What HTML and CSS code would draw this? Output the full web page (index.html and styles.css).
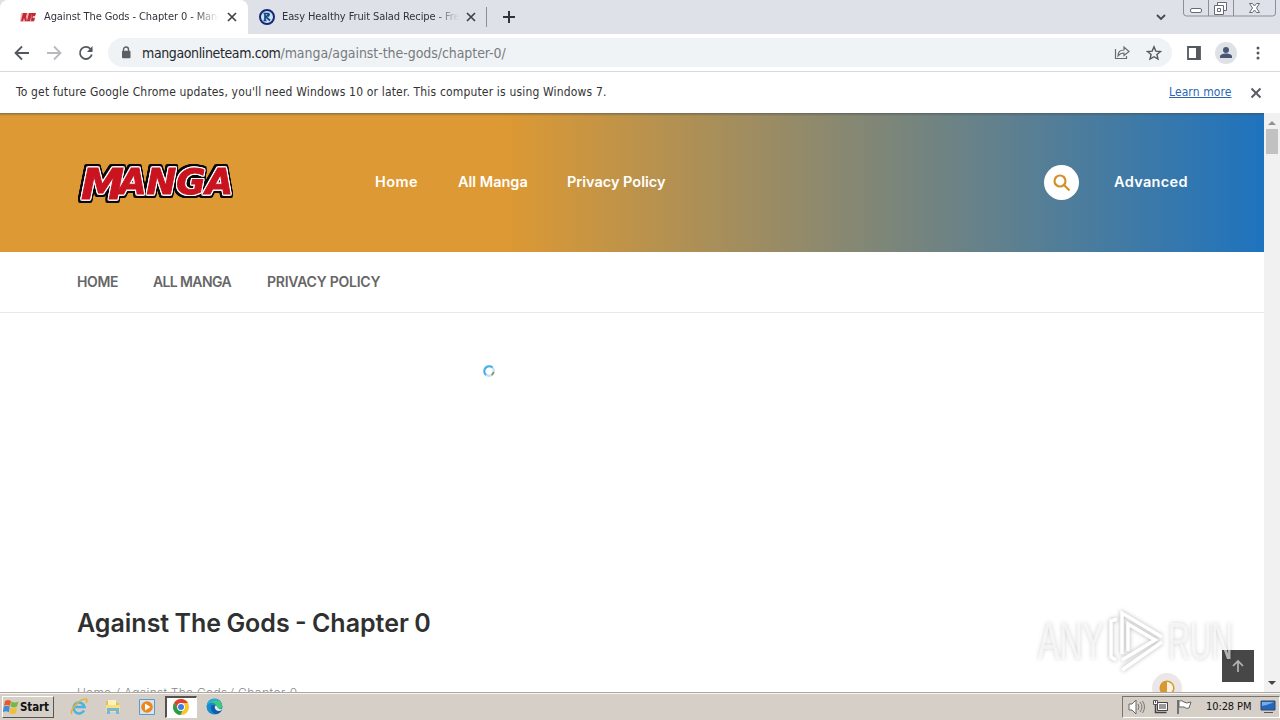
FILE: index.html
```html
<!DOCTYPE html>
<html lang="en">
<head>
<meta charset="utf-8">
<title>Against The Gods - Chapter 0</title>
<link rel="stylesheet" href="styles.css">
</head>
<body>
<div class="screen">
  <div class="tabstrip">
    <div class="tab tab-active">
      <svg class="favicon" width="16" height="16" viewBox="0 0 16 16"><path d="M1 4h15l-2 9H0z" fill="#efb9bd"/><path d="M1 12 3 4h4l-1 4 1 4H5L4 9l-1 3zM7 12l2-8h3l-2 8zM11 12l1-8h4l-1 3h-2l-.5 2H15l-1 3z" fill="#c32932"/></svg>
      <span class="tab-title title-one">Against The Gods - Chapter 0 - Mang</span>
      <svg class="tab-close" width="10" height="10" viewBox="0 0 10 10"><path d="M1 1l8 8M9 1l-8 8"/></svg>
    </div>
    <div class="tab tab-second">
      <svg class="favicon" width="16" height="16" viewBox="0 0 16 16"><circle cx="8" cy="8" r="7" fill="#c6e3fb" stroke="#18276f" stroke-width="2"/><path d="M4.500 4.500h3M4.500 11.500h3M6 4.500v7M10.500 4.500 7 8l4 3.500M7 4.500h2q2 1 0 3" fill="none" stroke="#174488" stroke-width="1.700"/></svg>
      <span class="tab-title title-two">Easy Healthy Fruit Salad Recipe - Fre</span>
      <svg class="tab-close" width="10" height="10" viewBox="0 0 10 10"><path d="M1 1l8 8M9 1l-8 8"/></svg>
    </div>
    <div class="tab-divider"></div>
    <svg class="new-tab" width="12" height="12" viewBox="0 0 12 12"><path d="M6 0v12M0 6h12"/></svg>
    <svg class="chevron" width="10" height="7" viewBox="0 0 10 7"><path d="M1 1l4 4 4-4"/></svg>
    <svg class="window-buttons" width="94" height="18" viewBox="0 0 94 18"><path d="M.5 0v13q0 3 3 3h86q3 0 3-3V0M25.500 0v16M50.500 0v16" fill="none" stroke="#8b8f98"/><rect x="7.500" y="8.500" width="11" height="4" rx="1.500" fill="#fff" stroke="#656a76"/><path d="M34.500 2.500h9v8h-9z" fill="#fff" stroke="#656a76"/><path d="M31.500 5.500h9v9h-9z" fill="#fff" stroke="#656a76"/><path d="M34.500 8.500h3v3h-3z" fill="none" stroke="#656a76"/><path d="M66.500 3.500h3l2 2.500 2-2.500h3l-3 4.500 3 4.500h-3l-2-2.500-2 2.500h-3l3-4.500z" fill="#fff" stroke="#656a76"/></svg>
  </div>

  <div class="toolbar">
    <svg class="nav-icon back" width="16" height="16" viewBox="0 0 16 16"><path d="M15 8H2M8 1.500 1.500 8 8 14.500"/></svg>
    <svg class="nav-icon forward" width="16" height="16" viewBox="0 0 16 16"><path d="M1 8h13M8 1.500 14.500 8 8 14.500"/></svg>
    <svg class="nav-icon reload" width="16" height="16" viewBox="0 0 16 16"><path d="M13.800 9.500A6 6 0 1 1 12.500 4L14 5.500"/><path d="M14.500 1v6H9z" class="solid"/></svg>
    <div class="omnibox">
      <svg class="lock" width="10" height="13" viewBox="0 0 10 13"><path d="M2.500 6V3.500a2.500 2.500 0 0 1 5 0V6" fill="none" stroke="#5b5f65" stroke-width="1.400"/><rect x="1" y="4.700" width="8.500" height="7.500" rx="1" fill="#5b5f65"/></svg>
      <span class="url"><span class="host">mangaonlineteam.com</span>/manga/against-the-gods/chapter-0/</span>
      <svg class="share" width="16" height="15" viewBox="0 0 16 15"><path d="M1.500 4v9.500h11V11M4 11c0-4 2-6 6-6V2l5 4.500-5 4V8C7 8 5.500 9 4 11z"/></svg>
      <svg class="star" width="16" height="16" viewBox="0 0 16 16"><path d="M8 1.800l1.800 4.300 4.700.4-3.600 3 1.100 4.600L8 11.700l-4 2.400 1.100-4.600-3.600-3 4.700-.4z"/></svg>
    </div>
    <svg class="panel" width="14" height="14" viewBox="0 0 14 14"><path d="M1 1h12v12H1z" fill="#fff" stroke="#55595f" stroke-width="1.800"/><path d="M9 1h4v12H9z" fill="#55595f"/></svg>
    <svg class="profile" width="22" height="22" viewBox="0 0 22 22"><circle cx="11" cy="11" r="11" fill="#dee1e6"/><circle cx="11" cy="8" r="3" fill="#485775"/><path d="M5 16v-1.500c0-4 12-4 12 0V16z" fill="#485775"/></svg>
    <svg class="more" width="4" height="14" viewBox="0 0 4 14"><circle cx="2" cy="2" r="1.500"/><circle cx="2" cy="7" r="1.500"/><circle cx="2" cy="12" r="1.500"/></svg>
  </div>

  <div class="infobar">
    <span class="notice">To get future Google Chrome updates, you'll need Windows 10 or later. This computer is using Windows 7.</span>
    <a class="learn">Learn more</a>
    <svg class="info-close" width="12" height="12" viewBox="0 0 12 12"><path d="M1.500 1.500l9 9M10.500 1.500l-9 9"/></svg>
  </div>

  <div class="viewport">
    <main class="page">
      <header class="site-header">
        <svg class="logo" width="162" height="44" viewBox="0 0 162 44"><g class="logo-word"><text class="logo-text" y="33"><tspan class="logo-m" x="5" y="38" textLength="43" lengthAdjust="spacingAndGlyphs">M</tspan><tspan x="43" y="32.500" textLength="114" lengthAdjust="spacingAndGlyphs">ANGA</tspan></text></g></svg>
        <nav class="main-nav">
          <a class="nav-home">Home</a><a class="nav-all">All Manga</a><a class="nav-privacy">Privacy Policy</a>
        </nav>
        <div class="search"><svg width="18" height="18" viewBox="0 0 18 18"><circle cx="7" cy="7" r="5.500"/><path d="M11 11l5.500 5.500"/></svg></div>
        <a class="advanced">Advanced</a>
      </header>
      <nav class="sub-nav">
        <a class="sub-home">HOME</a><a class="sub-all">ALL MANGA</a><a class="sub-privacy">PRIVACY POLICY</a>
      </nav>
      <section class="chapter">
        <h1>Against The Gods - Chapter 0</h1>
        <div class="crumbs"><span class="c-home">Home</span><i>/</i><span class="c-title">Against The Gods</span><i>/</i><span class="c-chapter">Chapter 0</span></div>
      </section>
      <svg class="spinner" width="14" height="14" viewBox="0 0 14 14"><circle cx="7" cy="7" r="4.800" fill="none" stroke="#b7e3f7" stroke-width="2.200"/><path d="M4 11A4.800 4.800 0 0 1 10.500 3.500" fill="none" stroke="#4faee8" stroke-width="2"/><path d="M11.600 8a4.800 4.800 0 0 1-2 3" fill="none" stroke="#9a8c60" stroke-width="1.800"/></svg>
      <svg class="contrast" width="30" height="30" viewBox="0 0 30 30"><circle cx="15" cy="15" r="15" fill="#ebe7e7"/><circle cx="15" cy="15" r="6.800" fill="#fff3df" stroke="#d69832" stroke-width="1.500"/><path d="M15 8a7 7 0 0 0 0 14z" fill="#d69832"/></svg>
      <div class="to-top"><svg width="14" height="14" viewBox="0 0 14 14"><path d="M7 13V2M2 7l5-5 5 5"/></svg></div>
      <svg class="watermark" width="204" height="72" viewBox="0 0 204 72"><g class="wm-shape"><text x="4" y="53" textLength="66" lengthAdjust="spacingAndGlyphs">ANY</text><text x="134" y="53" textLength="65" lengthAdjust="spacingAndGlyphs">RUN</text><path d="M83 13l-6 2v36l5 3M88 48V7l40 24M94 45V18l27 16-33 20M88 64l40-28" class="wm-line"/></g></svg>
    </main>
    <aside class="scrollbar">
      <svg width="8" height="5" viewBox="0 0 8 5"><path d="M0 5l4-4 4 4z" fill="#929292"/></svg>
      <div class="thumb"></div>
      <svg class="down" width="8" height="5" viewBox="0 0 8 5"><path d="M0 0l4 4 4-4z" fill="#444"/></svg>
    </aside>
  </div>

  <footer class="taskbar">
    <div class="start"><svg width="17" height="16" viewBox="0 0 17 16"><path d="M2 2q3-2 6 0L7 7Q4 5 1 7z" fill="#e65b2c"/><path d="M8.500 2.500q3 2 7 0L14 7.500q-3 2-6.500 0z" fill="#75b943"/><path d="M.800 7.800q3-2 6 0l-1 5.500q-3-2-6 0z" fill="#448bd1"/><path d="M7.500 8.500q3 2 6.500 0l-1 5.500q-3 2-6.500 0z" fill="#f2be36"/></svg><b>Start</b></div>
    <div class="launchers">
      <svg width="18" height="18" viewBox="0 0 18 18"><path d="M14 12.500A5.500 5.500 0 1 1 14.500 9H5" fill="none" stroke="#4bb3df" stroke-width="2.600"/><path d="M2 16C-1 13 9 1 15 1c3 0 2 2 1 4" fill="none" stroke="#dfb43a" stroke-width="1.600"/></svg>
      <svg width="18" height="18" viewBox="0 0 18 18"><path d="M2 3h5l1 2h7v9H2z" fill="#e7bf50"/><path d="M4 2h8v5H4z" fill="#f9f2bd"/><path d="M2 7h14v7H2z" fill="#f8df80"/><path d="M3 16v-6h12v6h-3v-3H6v3z" fill="#75b8df"/></svg>
      <svg width="18" height="18" viewBox="0 0 18 18"><path d="M1.500 1.500h15v15h-15z" fill="#d4e6f1" stroke="#5b9ac9"/><circle cx="9" cy="9" r="5.800" fill="#ee861c"/><path d="M7 5.500v7L12.500 9z" fill="#fff"/></svg>
      <div class="task-active"><svg width="16" height="16" viewBox="0 0 16 16"><circle cx="8" cy="8" r="8" fill="#f8c52c"/><path d="M1.100 4A8 8 0 0 1 14.900 4H8L5 10z" fill="#df4036"/><path d="M1.100 4 5 10l3 2 1.500-.5L7.500 16A8 8 0 0 1 1.100 4z" fill="#299b49"/><circle cx="8" cy="8" r="3.900" fill="#fff"/><circle cx="8" cy="8" r="3" fill="#3f7de0"/></svg></div>
      <svg class="edge" width="17" height="17" viewBox="0 0 17 17"><circle cx="8.500" cy="8.500" r="8" fill="#168bd1"/><path d="M1 7C3 0 14-1 16 7c1 4-4 5-6 3 2-5-6-7-9-3z" fill="#43c77b"/><path d="M1 7C3 0 10 0 13 3 9 2 4 4 1 7z" fill="#29acd9"/><path d="M5 8c2-2 4-1 5 1-2 3 2 5 6 3-4 7-12 4-11-4z" fill="#145ca9"/><path d="M9 8c3-1 1 4 7 3l-1 1.500C11 14 8 11 9 8z" fill="#e5edf0"/></svg>
    </div>
    <div class="tray">
      <svg class="sound" width="18" height="16" viewBox="0 0 18 16"><path d="M1 5h3l4-4v14l-4-4H1z" fill="#fff" stroke="#666"/><path d="M10 5q2 3 0 6M12 3q4 5 0 10M14.500 2q4 6 0 12" fill="none" stroke="#777"/></svg>
      <svg class="network" width="17" height="16" viewBox="0 0 17 16"><path d="M5.500 3.500h10v8h-10z" fill="#999" stroke="#444"/><path d="M6.500 4.500h8v6h-8z" fill="none" stroke="#fff"/><path d="M3.500 5v8.500h11" fill="none" stroke="#444" stroke-width="1.500"/><path d="M1.500 1.500h4v4h-4zM3.500 1v3" fill="#fff" stroke="#555"/></svg>
      <svg class="flag" width="17" height="16" viewBox="0 0 17 16"><path d="M2 1v14" stroke="#555" stroke-width="1.500"/><path d="M3 2q3-1 5 1t7 0l-2 6q-3 1-5-1H3z" fill="#fff" stroke="#666"/></svg>
      <span>10:28 PM</span>
      <svg class="desktop" width="16" height="14" viewBox="0 0 16 14"><path d="M1 1h14v9H1z" fill="#2466be" stroke="#354865"/><path d="M2 2h12Q9 5 2 6z" fill="#70aeea"/><path d="M4 12.500h9" stroke="#555"/></svg>
    </div>
  </footer>
</div>
</body>
</html>
```

FILE: styles.css
```css
* { box-sizing: border-box; }
body { margin: 0; overflow: hidden; }
.screen { width: 1280px; height: 720px; display: flex; flex-direction: column; background: #fff; font-family: "DejaVu Sans Condensed", "DejaVu Sans", sans-serif; }
svg { display: block; flex: none; }
span, a { white-space: nowrap; }

.tabstrip { height: 34px; flex: none; background: #dee1e8; display: flex; align-items: center; }
.tab { display: flex; align-items: center; height: 34px; flex: none; }
.tab-active { width: 248px; padding-left: 20px; background: #fff; border-radius: 8px 8px 0 0; }
.tab-second { width: 238px; padding-left: 11px; }
.tab-title { font-size: 11px; color: #30343a; overflow: hidden; -webkit-mask-image: linear-gradient(to right, #000 86%, transparent 100%); mask-image: linear-gradient(to right, #000 86%, transparent 100%); line-height: 18px; }
.title-one { width: 175px; margin-left: 8px; letter-spacing: -.1px; }
.title-two { width: 177px; margin-left: 7px; letter-spacing: -.1px; }
.tab-close { margin-left: 8px; fill: none; stroke: #3f4247; stroke-width: 1.700; }
.title-two + .tab-close { margin-left: 7px; }
.tab-divider { width: 1px; height: 20px; background: #8b8f96; }
.new-tab { margin-left: 16px; fill: none; stroke: #303338; stroke-width: 2; }
.chevron { margin-left: 641px; fill: none; stroke: #44484f; stroke-width: 1.800; }
.window-buttons { margin-left: 17px; align-self: flex-start; }

.toolbar { height: 38px; flex: none; display: flex; align-items: center; padding-left: 14px; border-bottom: 1px solid #d8dadd; }
.nav-icon { fill: none; stroke: #54585e; stroke-width: 1.800; margin-right: 16px; }
.forward { stroke: #b7b9bc; }
.reload { margin-right: 14px; }
.toolbar .solid { fill: #54585e; stroke: none; }
.omnibox { width: 1064px; height: 29px; background: #f0f3f5; border-radius: 15px; display: flex; align-items: center; padding-left: 13px; }
.url { width: 970px; margin-left: 11px; font-size: 14px; letter-spacing: -.06px; color: #777b80; }
.host { color: #25282c; letter-spacing: -.38px; }
.share { margin-left: 2px; fill: none; stroke: #686c72; stroke-width: 1.200; }
.star { margin-left: 16px; fill: none; stroke: #55595f; stroke-width: 1.400; }
.panel { margin-left: 15px; }
.profile { margin-left: 14px; }
.more { margin-left: 19px; fill: #55595f; }

.infobar { height: 41px; flex: none; display: flex; align-items: center; padding-left: 16px; font-size: 12px; color: #333; }
.infobar > span, .infobar > a { padding-bottom: 2px; }
.notice { width: 1153px; letter-spacing: .165px; }
.learn { width: 63px; color: #2b66b5; text-decoration: underline; letter-spacing: .1px; }
.info-close { margin-left: 18px; fill: none; stroke: #5a5d62; stroke-width: 2; }

.viewport { display: flex; height: 579px; flex: none; }
.page { position: relative; width: 1264px; height: 579px; overflow: hidden; font-family: Inter, "Open Sans", sans-serif; }
.site-header { height: 139px; display: flex; align-items: center; padding-left: 76px; background: linear-gradient(to bottom, rgba(70,75,80,.55), rgba(70,75,80,0) 3px), linear-gradient(to right, #dd9933 0%, #dd9933 40%, #1e73be 100%); color: #fff; font-size: 14.500px; font-weight: 600; }
.site-header a, .sub-nav a { padding-bottom: 2px; }
.logo { width: 162px; overflow: visible; }
.logo-word { filter: drop-shadow(1px 0 0 #fff) drop-shadow(-1px 0 0 #fff) drop-shadow(0 1px 0 #fff) drop-shadow(0 -1px 0 #fff) drop-shadow(1.500px 0 0 #090707) drop-shadow(-1.500px 0 0 #090707) drop-shadow(0 2px 0 #090707) drop-shadow(0 -1.500px 0 #090707); }
.logo-text { font: italic 700 35px "DejaVu Sans", sans-serif; fill: #c91420; stroke: #c91420; stroke-width: 1px; stroke-linejoin: miter; }
.logo-m { font-size: 43px; }
.main-nav { width: 669px; margin-left: 137px; display: flex; }
.nav-home { width: 83px; letter-spacing: .4px; }
.nav-all { width: 109px; }
.nav-privacy { letter-spacing: 0; }
.search { width: 35px; height: 35px; border-radius: 50%; background: #fff; display: flex; align-items: center; justify-content: center; }
.search svg { fill: none; stroke: #d5902c; stroke-width: 2.200; }
.advanced { margin-left: 35px; letter-spacing: .33px; }
.sub-nav { height: 61px; border-bottom: 1px solid #e8e8e8; display: flex; align-items: center; padding-left: 77px; color: #666; font-size: 14px; font-weight: 600; }
.sub-home { width: 76px; letter-spacing: -.4px; }
.sub-all { width: 114px; letter-spacing: -.62px; }
.sub-privacy { letter-spacing: -.24px; }
.chapter { padding: 292px 0 0 77px; }
h1 { margin: 0; height: 36px; line-height: 36px; font-size: 25px; font-weight: 600; letter-spacing: 0; word-spacing: -1px; color: #303030; white-space: nowrap; }
.crumbs { display: flex; margin-top: 43px; font-size: 12px; line-height: 18px; color: #888; font-weight: 300; }
.c-home { width: 38px; letter-spacing: .2px; }
.crumbs i { width: 9px; }
.c-title { width: 105px; letter-spacing: .25px; }
.c-chapter { letter-spacing: .5px; }
.spinner { position: absolute; left: 482px; top: 251px; }
.contrast { position: absolute; left: 1152px; top: 560px; }
.to-top { position: absolute; left: 1222px; top: 537px; width: 32px; height: 32px; background: #474747; display: flex; align-items: center; justify-content: center; }
.to-top svg { fill: none; stroke: #b4b4b4; stroke-width: 1.700; }
.watermark { position: absolute; left: 1034px; top: 493px; }
.wm-shape { fill: rgba(255,255,255,.6); filter: drop-shadow(0 0 2px rgba(0,0,0,.3)); font: 400 51px "Liberation Sans", sans-serif; }
.wm-line { fill: none; stroke: #fff; stroke-width: 3.500; }

.scrollbar { width: 16px; background: #f1f1f1; display: flex; flex-direction: column; align-items: center; padding-top: 7px; }
.thumb { width: 12px; height: 25px; margin-top: 4px; background: #c1c1c1; }
.down { margin-top: 527px; }

.taskbar { height: 28px; flex: none; display: flex; align-items: center; background: #d5cfc8; border-top: 1px solid #aaa7a2; box-shadow: inset 0 1px #f8f6f2; padding-left: 2px; font-family: "DejaVu Sans Condensed", sans-serif; font-size: 11px; }
.start { width: 52px; height: 22px; border: 1px solid; border-color: #fff #555 #555 #fff; display: flex; align-items: center; color: #111; }
.start b { font-size: 11.5px; letter-spacing: -.1px; }
.launchers { display: flex; align-items: center; margin-left: 16px; gap: 16px; }
.task-active { width: 32px; height: 22px; margin-left: -7px; background: #fff; border: 1px solid #fff; border-top: 2px solid #55514d; border-left: 2px solid #55514d; display: flex; align-items: center; justify-content: center; }
.task-active svg { margin-left: -2px; }
.edge { margin-left: -7px; }
.tray { margin-left: auto; width: 158px; height: 22px; border: 1px solid; border-color: #77736e #fff #fff #77736e; display: flex; align-items: center; padding-left: 5px; }
.network { margin-left: 6px; }
.flag { margin-left: 7px; }
.tray span { width: 47px; margin-left: 13px; color: #111; letter-spacing: -.1px; }
.desktop { margin-left: 7px; }
```
